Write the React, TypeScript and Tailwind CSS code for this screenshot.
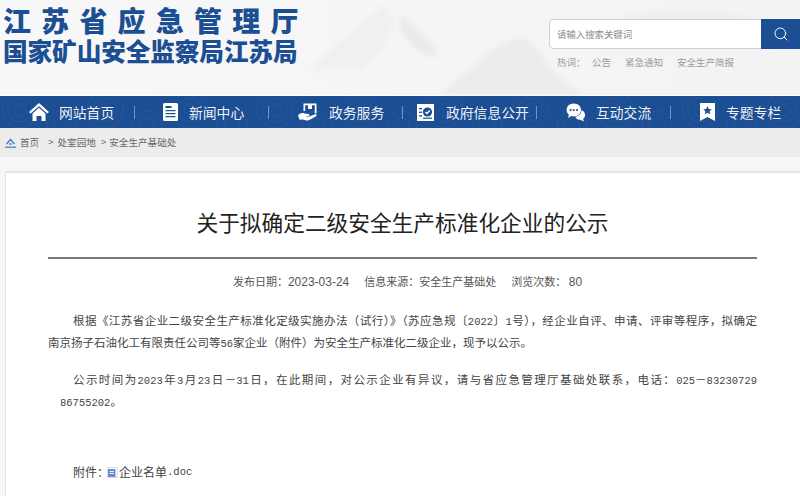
import React from "react";
import { Search } from "lucide-react";

const FONT = "font-['Noto_Sans_CJK_SC','Noto_Sans',sans-serif]";

const HomeIcon = () => (
  <svg width="20" height="18" viewBox="0 0 20 18" fill="white">
    <path d="M10 0 L20 9 L18.4 10.6 L10 3.2 L1.6 10.6 L0 9 Z" />
    <path d="M3.5 10.5 L10 4.8 L16.5 10.5 V18 H12.5 V13 H7.5 V18 H3.5 Z" />
  </svg>
);

const NewsIcon = () => (
  <svg width="15" height="18" viewBox="0 0 15 18">
    <rect width="15" height="18" rx="1.5" fill="white" />
    <rect x="2.5" y="3" width="6" height="2" fill="#1b4e93" />
    <rect x="2.5" y="7" width="10" height="1.2" fill="#1b4e93" />
    <rect x="2.5" y="10" width="10" height="1.2" fill="#1b4e93" />
    <rect x="2.5" y="13" width="10" height="1.2" fill="#1b4e93" />
  </svg>
);

const ServiceIcon = () => (
  <svg width="20" height="18" viewBox="0 0 20 18" fill="white">
    <path d="M5.5 0.5 H18.5 V10.5 H16.8 V2.2 H7.2 V8 H5.5 Z" />
    <rect x="10" y="2" width="4" height="4" />
    <path d="M0 12.5 C2 10 4.5 9.5 6.5 10.5 L10.5 11 C12 11.2 12 13 10.5 13 H8 V13.6 H11.5 L17 11.2 C18.6 10.8 19.4 12.4 18 13.2 L11.5 17 C9.5 18 7 17 5 16.4 L1.5 16.8 Z" />
  </svg>
);

const InfoIcon = () => (
  <svg width="17" height="17" viewBox="0 0 17 17">
    <rect width="17" height="17" fill="white" />
    <rect x="2" y="4" width="3" height="1.3" fill="#1b4e93" />
    <rect x="2" y="7.6" width="3" height="1.3" fill="#1b4e93" />
    <rect x="2" y="11.2" width="3" height="1.3" fill="#1b4e93" />
    <circle cx="10.5" cy="8" r="4.6" fill="#1b4e93" />
    <path d="M8.4 8 L10 9.6 L12.8 6.6" fill="none" stroke="white" strokeWidth="1.4" />
    <rect x="6" y="13.6" width="9" height="1.2" fill="#1b4e93" />
  </svg>
);

const ChatIcon = () => (
  <svg width="19" height="19" viewBox="0 0 19 19">
    <path d="M14 7 C17 7 19 9.2 19 12 C19 13.6 18.3 15 17.2 15.8 L17.8 18.6 L14.4 16.8 C11.5 17 9 15 9 12 Z" fill="white" />
    <ellipse cx="7.8" cy="7" rx="7.8" ry="7" fill="#1b4e93" />
    <path d="M7.8 0.6 C12 0.6 15 3.4 15 7 C15 10.6 12 13.4 7.8 13.4 C7 13.4 6.2 13.3 5.4 13.1 L2.2 15 L2.8 11.6 C1.4 10.4 0.6 8.8 0.6 7 C0.6 3.4 3.6 0.6 7.8 0.6 Z" fill="white" />
    <circle cx="4.6" cy="7" r="1.1" fill="#1b4e93" />
    <circle cx="7.8" cy="7" r="1.1" fill="#1b4e93" />
    <circle cx="11" cy="7" r="1.1" fill="#1b4e93" />
  </svg>
);

const BookmarkIcon = () => (
  <svg width="15" height="18" viewBox="0 0 15 18">
    <path d="M0 0 H15 V18 L7.5 14 L0 18 Z" fill="white" />
    <path d="M7.5 3.2 L8.8 6 L11.8 6.3 L9.6 8.3 L10.2 11.2 L7.5 9.7 L4.8 11.2 L5.4 8.3 L3.2 6.3 L6.2 6 Z" fill="#1b4e93" />
  </svg>
);

// soft ink mountains behind the header
const Mountains = () => (
  <svg className="absolute inset-0 blur-[2px]" width="800" height="95" viewBox="0 0 800 95" fill="none">
    <path d="M440 95 C455 80 470 70 485 55 C500 45 510 38 522 37 C535 42 545 62 560 78 L585 95 Z" fill="#ececec" />
    <path d="M400 15 C412 25 430 35 438 55 C425 60 410 45 400 30 Z" fill="#eaeaea" />
    <path d="M620 18 C670 8 720 8 760 20 C720 30 660 30 620 18 Z" fill="#eeeeee" />
    <path d="M310 70 C330 50 350 30 385 5 C400 20 395 40 360 70 Z" fill="#f0f0f0" />
  </svg>
);

// swirl clouds on the blue nav
const Clouds = () => {
  const centers = [20, 105, 190, 275, 360, 445, 530, 615, 700, 785];
  return (
    <svg className="absolute inset-0" width="800" height="32" viewBox="0 0 800 32" fill="none" stroke="#2f62a6" strokeWidth="1" opacity="0.45">
      {centers.map((c) => (
        <g key={c}>
          <circle cx={c} cy={14} r={6} />
          <circle cx={c} cy={14} r={12} />
          <circle cx={c} cy={14} r={18} />
          <circle cx={c + 42} cy={30} r={8} />
          <circle cx={c + 42} cy={30} r={15} />
        </g>
      ))}
    </svg>
  );
};

const navItems = [
  { icon: <HomeIcon />, label: "网站首页", w: "w-[135px]", gap: "gap-[10px]", pl: "pl-[29px]" },
  { icon: <NewsIcon />, label: "新闻中心", w: "w-[134px]", gap: "gap-[11px]", pl: "pl-[28px]" },
  { icon: <ServiceIcon />, label: "政务服务", w: "w-[134px]", gap: "gap-[11px]", pl: "pl-[29px]" },
  { icon: <InfoIcon />, label: "政府信息公开", w: "w-[134px]", gap: "gap-[12px]", pl: "pl-[14px]" },
  { icon: <ChatIcon />, label: "互动交流", w: "w-[134px]", gap: "gap-[11px]", pl: "pl-[29px]" },
  { icon: <BookmarkIcon />, label: "专题专栏", w: "w-[129px]", gap: "gap-[11px]", pl: "pl-[29px]" },
];

const Num = ({ children }: { children: React.ReactNode }) => (
  <span className="font-['Liberation_Mono',monospace] text-[10.5px] leading-none">{children}</span>
);

const Arial = ({ children }: { children: React.ReactNode }) => (
  <span className="font-['Liberation_Sans',sans-serif] text-[12px] leading-none">{children}</span>
);

export default function App() {
  return (
    <div className={`${FONT} w-[800px] h-[496px] overflow-hidden bg-[#f6f6f6]`}>
      {/* Header */}
      <div className="relative h-[95px] bg-linear-to-r from-[#f8f8f8] to-[#f3f3f3]">
        <Mountains />
        <div className="relative flex justify-between">
          <div className="pl-[3px] pt-[5px] text-[#1b4e93] font-black">
            <div className="text-[28px] leading-[31px] tracking-[10.2px] whitespace-nowrap">江苏省应急管理厅</div>
            <div className="text-[24.6px] leading-[29px] -tracking-[0.05px] whitespace-nowrap">国家矿山安全监察局江苏局</div>
          </div>
          <div className="w-[251px] pt-[19px]">
            <div className="flex h-[30px]">
              <div className="flex-1 flex items-center pl-[7px] bg-white border border-[#cfcfcf] border-r-0 rounded-l-[5px] text-[9.4px] text-[#8a8a8a]">
                请输入搜索关键词
              </div>
              <div className="w-[39px] bg-[#1b4e93] flex items-center justify-center">
                <Search size={16} color="white" strokeWidth={1.5} />
              </div>
            </div>
            <div className="flex pl-[8px] pt-[6px] text-[9.5px] leading-[14px] text-[#9a9a9a]">
              <span className="w-[35px]">热词：</span>
              <span className="w-[33px]">公告</span>
              <span className="w-[52px]">紧急通知</span>
              <span>安全生产简报</span>
            </div>
          </div>
        </div>
      </div>
      {/* Nav */}
      <div className="h-px bg-white" />
      <div className="relative flex h-[32px] bg-[#1b4e93]">
        <Clouds />
        {navItems.map((item, i) => (
          <div key={item.label} className={`relative flex items-center ${item.w} ${item.pl} ${item.gap}`}>
            {item.icon}
            <span className="text-[13.8px] text-white/95 whitespace-nowrap">{item.label}</span>
            {i < 5 && <span className="absolute right-0 top-[10px] h-[13px] w-px bg-white/40" />}
          </div>
        ))}
      </div>
      {/* Breadcrumb */}
      <div className="flex items-center h-[29px] pl-[5px] bg-[#ececec] text-[9.6px] text-[#666]">
        <svg width="11" height="10" viewBox="0 0 11 10" fill="none" stroke="#3a7bc0" strokeWidth="1.2">
          <path d="M1.5 6 L5.5 1.5 L9.5 6" />
          <path d="M4 6 H7" />
          <path d="M0 9.2 H11" />
        </svg>
        <span className="ml-[4px]">首页</span>
        <span className="ml-[9px]">&gt;</span>
        <span className="ml-[4px]">处室园地</span>
        <span className="ml-[5px]">&gt;</span>
        <span className="ml-[3px]">安全生产基础处</span>
      </div>
      {/* Article card */}
      <div className="pt-[14px] pl-[5px]">
        <div className="bg-white border-l border-t-2 border-[#e6e6e6] h-[340px] pl-[42px] pr-[43px]">
          <h1 className="pt-[33px] text-center text-[21.7px] leading-[32px] text-[#222] font-normal whitespace-nowrap">
            关于拟确定二级安全生产标准化企业的公示
          </h1>
          <div className="mt-[19px] border-t-2 border-[#777]" />
          <div className="flex justify-center gap-[15px] pl-[10px] pt-[14px] text-[11px] leading-[16px] text-[#555]">
            <span>发布日期：<Arial>2023-03-24</Arial></span>
            <span>信息来源：安全生产基础处</span>
            <span>浏览次数： <Arial>80</Arial></span>
          </div>
          <div className="pt-[20px] text-[11.5px] leading-[22px] text-[#444]">
            <span className="block h-[22px] ml-[25px] whitespace-nowrap [text-align-last:justify] [text-justify:inter-character]">
              根据《江苏省企业二级安全生产标准化定级实施办法（试行）》（苏应急规〔<Num>2022</Num>〕<Num>1</Num>号），经企业自评、申请、评审等程序，拟确定
            </span>
            <span className="block h-[22px] w-[482px] whitespace-nowrap [text-align-last:justify] [text-justify:inter-character]">
              南京扬子石油化工有限责任公司等<Num>56</Num>家企业（附件）为安全生产标准化二级企业，现予以公示。
            </span>
            <span className="block h-[22px] mt-[15px] ml-[25px] whitespace-nowrap [text-align-last:justify] [text-justify:inter-character]">
              公示时间为<Num>2023</Num>年<Num>3</Num>月<Num>23</Num>日－<Num>31</Num>日，在此期间，对公示企业有异议，请与省应急管理厅基础处联系，电话：<Num>025</Num>－<Num>83230729</Num>
            </span>
            <span className="block h-[22px] pl-[12px]"><Num>86755202</Num>。</span>
            <p className="flex items-center h-[22px] pl-[25px] mt-[49px] text-[12px]">
              附件：
              <svg className="-ml-[2px] mr-[1px]" width="11" height="11" viewBox="0 0 11 11">
                <rect x="0.5" y="0.5" width="10" height="10" fill="#fff" stroke="#ddd" />
                <rect x="1" y="2" width="7.5" height="8" fill="#6a8ad8" />
                <path d="M2.5 4.5 H7 M2.5 6.5 H7" stroke="#fff" strokeWidth="0.8" />
              </svg>
              企业名单<Num>.doc</Num>
            </p>
          </div>
        </div>
      </div>
    </div>
  );
}
